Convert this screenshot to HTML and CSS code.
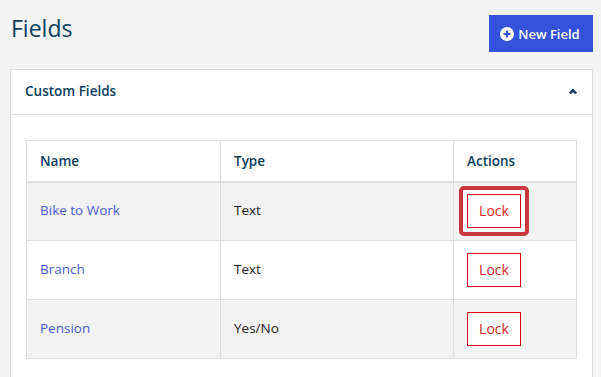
FILE: index.html
```html
<!DOCTYPE html>
<html lang="en">
<head>
    <meta charset="UTF-8">
    <meta name="viewport" content="width=device-width, initial-scale=1.0">
    <title>Fields</title>
    <link rel="stylesheet" href="styles.css">
</head>
<body>
    <div class="page">
        <div class="page-header">
            <h1>Fields</h1>
            <button class="new-button">
                <svg class="plus-icon" width="14" height="14" viewBox="0 0 14 14">
                    <circle cx="7" cy="7" r="7" fill="#fff"/>
                    <path d="M7 3.5v7M3.5 7h7" stroke="#3452db" stroke-width="2.2"/>
                </svg>
                New Field
            </button>
        </div>

        <div class="panel">
            <div class="panel-header">
                <span class="panel-title">Custom Fields</span>
                <svg class="chevron" width="10" height="7" viewBox="0 0 10 7">
                    <path d="M1.8 5.5L5 2.3l3.2 3.2" fill="none" stroke="#0c3c60" stroke-width="2.4"/>
                </svg>
            </div>
            <div class="panel-body">
                <table class="fields-table">
                    <thead>
                        <tr>
                            <th class="col-name">Name</th>
                            <th class="col-type">Type</th>
                            <th class="col-actions">Actions</th>
                        </tr>
                    </thead>
                    <tbody>
                        <tr>
                            <td><a href="#">Bike to Work</a></td>
                            <td>Text</td>
                            <td><button class="lock-button focused">Lock</button></td>
                        </tr>
                        <tr>
                            <td><a href="#">Branch</a></td>
                            <td>Text</td>
                            <td><button class="lock-button">Lock</button></td>
                        </tr>
                        <tr>
                            <td><a href="#">Pension</a></td>
                            <td>Yes/No</td>
                            <td><button class="lock-button">Lock</button></td>
                        </tr>
                    </tbody>
                </table>
            </div>
        </div>
    </div>
</body>
</html>
```

FILE: styles.css
```css
* {
    margin: 0;
    padding: 0;
    box-sizing: border-box;
}

body {
    font-family: 'Open Sans', 'Noto Sans', sans-serif;
    background: #f4f4f4;
    color: #222;
    font-size: 13.5px;
}

.page {
    padding: 0 8px 0 10px;
}

.page-header {
    display: flex;
    justify-content: space-between;
    align-items: flex-start;
    height: 69px;
}

.page-header h1 {
    font-size: 23px;
    font-weight: 400;
    color: #0c3c60;
    margin-top: 12px;
    margin-left: 1px;
}

.new-button {
    display: flex;
    align-items: center;
    justify-content: center;
    gap: 4px;
    margin-top: 15px;
    height: 37px;
    width: 104px;
    padding: 0 4px 0 2px;
    background: #3452db;
    color: white;
    border: none;
    font-family: inherit;
    font-size: 13px;
    font-weight: 600;
    white-space: nowrap;
}

.plus-icon {
    flex-shrink: 0;
}

.panel {
    background: white;
    border: 1px solid #ddd;
    height: 320px;
}

.panel-header {
    display: flex;
    justify-content: space-between;
    align-items: center;
    height: 45px;
    padding: 0 14px 3px 14px;
    border-bottom: 1px solid #ddd;
}

.panel-title {
    font-weight: 600;
    color: #0c3c60;
}

.chevron {
    margin-top: 2px;
}

.panel-body {
    padding: 25px 15px;
}

.fields-table {
    width: 100%;
    border-collapse: collapse;
    border: 1px solid #ddd;
}

.fields-table th,
.fields-table td {
    text-align: left;
    padding: 0 12px 0 13px;
    border: 1px solid #ddd;
}

.fields-table th {
    height: 41px;
    font-weight: 600;
    color: #0c3c60;
    border-bottom-width: 2px;
}

.fields-table td {
    height: 59px;
    padding-bottom: 2px;
}

.col-name {
    width: 194px;
}

.col-type {
    width: 233px;
}

.fields-table tbody tr:nth-child(odd) {
    background: #f2f2f2;
}

.fields-table a {
    color: #4a5bd6;
    text-decoration: none;
}

.lock-button {
    position: relative;
    display: block;
    width: 54px;
    height: 34px;
    margin-top: 1px;
    background: white;
    border: 1px solid #e0001b;
    color: #e0202e;
    font-family: inherit;
    font-size: 14px;
}

.lock-button.focused {
    box-shadow: 0 0 0 4px white;
}

.lock-button.focused::after {
    content: "";
    position: absolute;
    inset: -9px;
    border: 4px solid #c8373d;
    border-radius: 5px;
}
```
